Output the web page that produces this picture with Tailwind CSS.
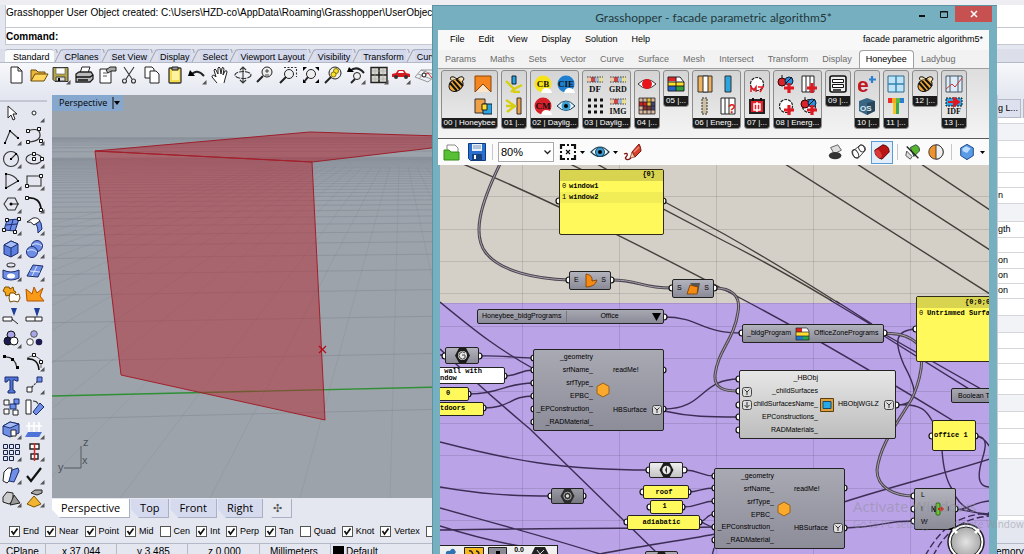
<!DOCTYPE html>
<html lang="en">
<head>
  <meta charset="UTF-8">
  <meta name="viewport" content="width=device-width, initial-scale=1.0">
  <title>Grasshopper - facade parametric algorithm5*</title>
  <script src="https://cdn.jsdelivr.net/npm/@tailwindcss/browser@4"></script>
</head>
<body class="relative flex h-screen flex-col overflow-hidden bg-[#e4e7f0] font-['Liberation_Sans',sans-serif] text-black">

  <!-- Rhino: command history -->
  <header class="border-t-[5px] border-[#eeeef2] bg-[#e4e7f0] pl-[5px]">
    <p class="h-[23px] border-b border-l border-[#c4c8d0] bg-white text-[10px] leading-4 whitespace-nowrap">Grasshopper User Object created: C:\Users\HZD-co\AppData\Roaming\Grasshopper\UserObjects</p>
    <label class="flex h-[17px] items-center border-b border-l border-[#c4c8d0] bg-white text-[10px] font-bold">Command:<input type="text" class="ml-2 h-3 flex-1 outline-none"></label>
  </header>

  <!-- Rhino: toolbar tabs and icons -->
  <nav id="rhino-tabs" class="mt-1 flex h-[14px] items-stretch border-b border-[#b4b9c8] bg-[#dcdfea] pl-[5px] text-[9px] leading-[14px]"></nav>
  <div class="h-[32px] bg-linear-to-b from-[#f7f8fb] to-[#e4e7f0] pl-[6px]">
    <div id="rhino-tools" class="flex w-[428px] justify-between pt-[2px]"></div>
  </div>

  <main class="flex min-h-0 flex-1">
    <div class="w-[52px] pt-[5px] pr-[5px] pb-[11px]">
      <div id="side-tools" class="grid h-full auto-rows-fr grid-cols-2 border-t-2 border-[#c3c7d2]"></div>
    </div>

    <section class="flex min-w-0 flex-1 flex-col">
      <div class="relative min-h-0 flex-1 overflow-hidden bg-[#9ca3ab]">
        <svg class="absolute inset-0 h-full w-full">
          <g transform="translate(-52 -95)">
            <g id="ground" stroke="#6d7580" stroke-opacity=".3" fill="none"></g>
            <path d="M52 396L440 387" stroke="#2f8f35" stroke-width="1.3"/>
            <path d="M95 151L310 132L440 136V147L312 162Z" fill="#b0202c" fill-opacity=".5" stroke="#9c1f2b"/>
            <path d="M95 151L312 162L325 420L121 375Z" fill="#b42832" fill-opacity=".5" stroke="#a3202c"/>
            <path d="M319 346l7 7m0-7l-7 7" stroke="#b80d18" stroke-width="1.3"/>
            <path d="M64 468H81V446" stroke="#555b63" fill="none"/>
            <g fill="#4d535b" font-size="11"><text x="83" y="446">z</text><text x="58" y="471">y</text><text x="82" y="464">x</text></g>
          </g>
        </svg>
        <button class="relative flex h-[16px] items-center bg-[#86a8cf] pr-[3px] pl-[7px] font-['Open_Sans'] text-[9px]">Perspective
          <svg class="ml-[5px] h-[12px] w-[8px]" viewBox="0 0 8 12"><path d="M1 0V12" stroke="#111"/><path d="M2 4H8L5 8Z"/></svg>
        </button>
      </div>
      <div id="view-tabs" class="flex h-[22px] items-start pt-[1px] font-['Open_Sans'] text-[11px]"></div>
    </section>

    <!-- Rhino: properties panel -->
    <aside class="flex w-[27px] flex-col overflow-hidden border-l border-[#c9ccd6] bg-white text-[9px]">
      <div class="flex h-[23px] shrink-0 items-end gap-[2px] bg-[#e4e7f0] leading-[17px] whitespace-nowrap"><span class="border border-l-0 border-[#b4b9c8] bg-[#dde1ef] pr-[2px]">g L...</span><span class="border border-[#b4b9c8] bg-[#dde1ef] px-1">D</span></div>
      <div id="props" class="min-h-0 flex-1 overflow-hidden"></div>
    </aside>
  </main>

  <footer>
    <div id="osnap" class="flex h-[23px] items-center gap-[6px] pl-[9px] text-[9px]"></div>
    <div class="flex h-[11px] overflow-hidden border-t border-[#b4b9c8] text-[10px] leading-4 whitespace-nowrap">
      <span class="w-[46px] border-r border-[#b4b9c8] pl-[6px]">CPlane</span>
      <span class="w-[71px] border-r border-[#b4b9c8] pl-4">x 37.044</span>
      <span class="w-[71px] border-r border-[#b4b9c8] pl-5">y 3.485</span>
      <span class="w-[72px] border-r border-[#b4b9c8] pl-5">z 0.000</span>
      <span class="w-[71px] border-r border-[#b4b9c8] pl-[10px]">Millimeters</span>
      <span class="flex flex-1 gap-[2px] pl-[2px]"><i class="mt-[2px] h-3 w-[11px] bg-black"></i>Default</span>
      <span class="w-[28px]">emory</span>
    </div>
  </footer>

  <!-- Grasshopper window -->
  <section class="absolute top-[5px] right-[27px] bottom-0 left-[432px] flex flex-col border-t border-l border-[#5c93a3] bg-[#76b0c0] pr-2 pl-[5px]">
    <div class="relative flex h-[24px] shrink-0 items-center justify-center font-['Lato'] text-[12px] text-[#24363c]">
      <h1>Grasshopper - facade parametric algorithm5*</h1>
      <div class="absolute top-0 -right-[3px] flex h-4 items-stretch">
        <button aria-label="Minimize" class="w-[22px]"><svg class="mx-auto h-4 w-3" viewBox="0 0 12 16"><path d="M3 10H9" stroke="#111" stroke-width="2"/></svg></button>
        <button aria-label="Maximize" class="w-[22px]"><svg class="mx-auto h-4 w-3" viewBox="0 0 12 16"><path d="M2.500 5.500H9.500V11.500H2.500ZM2 6H10" stroke="#111" fill="none"/></svg></button>
        <button aria-label="Close" class="w-[37px] bg-[#c75050]"><svg class="mx-auto h-4 w-3" viewBox="0 0 12 16"><path d="M3 5L9 11M9 5L3 11" stroke="#fff" stroke-width="1.5"/></svg></button>
      </div>
    </div>

    <div class="flex h-[20px] shrink-0 items-center justify-between bg-[#f8f8f8] px-[6px] text-[9px]">
      <nav class="flex gap-[14px] pl-[6px]"><a href="#">File</a><a href="#">Edit</a><a href="#">View</a><a href="#">Display</a><a href="#">Solution</a><a href="#">Help</a></nav>
      <span>facade parametric algorithm5*</span>
    </div>

    <nav id="gh-tabs" class="flex h-[18px] shrink-0 items-end bg-[#f2f2f2] text-[9px] leading-[18px] text-[#6c6c6c]"></nav>
    <div id="ribbon" class="flex h-[70px] shrink-0 items-start gap-[3px] border-t border-[#a0a0a0] bg-linear-to-b from-[#dedede] to-[#f4f4f4] pt-[1px] pl-[3px]"></div>

    <div class="flex h-[27px] shrink-0 items-center justify-between border-t border-[#5a5a5a] bg-[#fbfbfb] pr-1 pl-1">
      <div class="flex items-center gap-[5px]">
        <button aria-label="Open file"><svg class="h-5 w-5" viewBox="0 0 20 20"><path d="M5 3h8l3 3v8H5z" fill="#fff" stroke="#888"/><path d="M2 8h5l2 2h8v8H2z" fill="#58c034" stroke="#348a1a"/></svg></button>
        <button aria-label="Save file"><svg class="h-5 w-5" viewBox="0 0 20 20"><path d="M1.500 1.500h17v17h-15l-2-2z" fill="#2a6fd0" stroke="#103a80"/><path d="M5 2h10v7H5z" fill="#e8f0fa"/><path d="M6 4h8M6 6h8" stroke="#7896bd"/><path d="M5 12h10v6H5z" fill="#163f7c"/><path d="M7 13h2v4H7z" fill="#fff"/></svg></button>
        <i class="h-4 w-px bg-[#c8c8c8]"></i>
        <div class="relative">
          <select aria-label="Zoom" class="block h-5 w-[56px] appearance-none border border-[#aaaaaa] bg-white pl-[2px] text-[11px]"><option>80%</option></select>
          <svg class="pointer-events-none absolute top-[8px] right-[3px] h-[5px] w-[7px]" viewBox="0 0 7 5"><path d="M.5.5L3.500 3.500L6.500.5" stroke="#222" stroke-width="1.300" fill="none"/></svg>
        </div>
        <button aria-label="Zoom extents" class="flex items-center gap-[3px]"><svg class="h-[18px] w-[18px]" viewBox="0 0 18 18"><path d="M2 6V2H6M12 2H16V6M16 12V16H12M6 16H2V12" stroke="#111" stroke-width="2.200" fill="none"/><path d="M8 2h2M8 16h2M2 8v2M16 8v2" stroke="#111" stroke-width="2"/><path d="M7 7l4 4m0-4l-4 4" stroke="#111" stroke-width="1.200"/></svg><svg class="h-[3px] w-[5px]" viewBox="0 0 5 3"><path d="M0 0H5L2.500 3Z"/></svg></button>
        <button aria-label="Named views" class="flex items-center gap-[3px]"><svg class="h-[18px] w-[20px]" viewBox="0 0 20 18"><path d="M1 9Q10-1 19 9Q10 18 1 9Z" fill="#eef6fb" stroke="#1b3a50" stroke-width="1.200"/><circle cx="10" cy="9" r="4.500" fill="#3d9dd0" stroke="#164a70"/><circle cx="10" cy="9" r="2"/></svg><svg class="h-[3px] w-[5px]" viewBox="0 0 5 3"><path d="M0 0H5L2.500 3Z"/></svg></button>
        <button aria-label="Sketch"><svg class="h-[18px] w-5" viewBox="0 0 20 18"><path d="M9 9L16 1Q18 4 18 8L12 14Z" fill="#d8402c" stroke="#7c1410"/><path d="M11 9L16 4" stroke="#f08a70" stroke-width="1.500"/><path d="M9 9L7 15L12 14Z" fill="#efc9a0" stroke="#7c1410" stroke-width=".6"/><path d="M1 11C5 9 5 12 3 14S5 18 8 15" stroke="#7c1410" fill="none" stroke-width="1.300"/></svg></button>
      </div>
      <div id="preview-tools" class="flex items-center gap-[3px]"></div>
    </div>

    <!-- Definition canvas -->
    <div class="relative ml-[2px] min-h-0 flex-1 overflow-hidden bg-[#d4cfc7] text-[7px]">
      <div class="absolute inset-x-0 top-[138px] bottom-0 border-t border-[#a993cf] bg-[#baa3e7]"></div>
      <svg class="absolute inset-0 h-full w-full">
        <defs>
          <symbol id="graft" viewBox="0 0 10 10"><rect x=".5" y=".5" width="9" height="9" rx="2" fill="#ddd" stroke="#444"/><path d="M2.500 2.500L5 5L7.500 2.500M5 5V8" stroke="#333" fill="none"/></symbol>
          <symbol id="flatten" viewBox="0 0 10 10"><rect x=".5" y=".5" width="9" height="9" rx="2" fill="#ddd" stroke="#444"/><path d="M5 2V7.500M2.500 5L5 7.500L7.500 5" stroke="#333" fill="none"/></symbol>
          <symbol id="comb" viewBox="0 0 14 16"><path d="M7 1L13 4.500V11.500L7 15L1 11.500V4.500Z" fill="#fba92d" stroke="#95621a"/></symbol>
        </defs>
        <g transform="translate(-440 -165)" fill="none">
          <path stroke="#000" stroke-opacity=".11" d="M522.500 165V560M619.500 165V560M716.500 165V560M813.500 165V560M910.500 165V560M440 196.500H1000M440 229.500H1000M440 261.500H1000M440 293.500H1000M440 326.500H1000M440 358.500H1000M440 391.500H1000M440 423.500H1000M440 455.500H1000M440 488.500H1000M440 520.500H1000"/>
          <g stroke="#45403c" stroke-width="1.400">
            <path d="M463 164C590 218 690 272 742 299"/>
            <path d="M570 164L663 209L724 241C770 264 805 285 832 301M597 164L663 201L724 234C770 260 810 285 840 304"/>
            <path d="M785 164L990 294M857 164L990 250M921 164L990 210"/>
          </g>
          <g stroke="#3c2d54" stroke-width="1.400">
            <path d="M742 299C820 340 890 382 960 425M830 300L870 324M836 301L872 324M884 334L990 394M884 336L990 402"/>
            <path d="M664 317C700 317 700 333 742 333M440 302C480 335 500 350 534 369M440 349C480 387 510 412 531 430L656 552"/>
            <path d="M440 355H447M479 356C500 355 515 358 534 358M504 376C520 376 518 370 534 370M468 394C500 394 505 383 534 383M483 408C512 408 508 396 534 396"/>
            <path d="M664 409C705 409 700 379 739 379M664 411C690 417 710 417 739 417"/>
            <path d="M440 442C510 460 560 470 650 470M440 487C480 494 510 496 552 496M684 470C700 470 700 476 715 476M688 492C700 492 700 488 715 488M682 507C700 507 700 501 715 501M699 522C706 522 706 514 715 514M699 522C706 522 706 527 715 527"/>
            <path d="M440 508C490 522 540 535 600 554M440 526C465 534 490 541 520 546M440 530C540 528 620 529 715 527M600 554C640 546 680 541 715 534M714 548L712 556"/>
            <path d="M844 502C900 484 940 475 990 459M844 528C880 528 880 521 914 521"/>
            <path d="M897 405C925 404 912 380 904 365C893 340 896 330 916 329M897 405C925 403 928 414 934 424M942 450C943 465 946 480 952 489"/>
            <path d="M975 436C990 436 985 450 982 460C976 480 980 487 990 487M975 436C984 437 986 442 990 447M955 509C968 510 975 514 990 514M955 509C965 512 975 501 990 501M952 489C958 505 970 514 990 515"/>
            <path d="M925 556C940 530 955 515 990 513M933 556C945 532 962 518 990 516" stroke-dasharray="7 3"/>
          </g>
          <!-- list wires are drawn as two parallel strokes -->
          <g id="list-wires">
            <path d="M500 164C480 205 472 235 486 253S535 279 569 280"/>
            <path d="M611 280C640 280 640 288 672 288"/>
            <path d="M714 288C732 288 741 296 738 312C734 340 718 350 715 375C714 389 725 391 739 391"/>
            <path d="M884 334C900 332 910 337 918 344C928 362 915 395 908 405C896 425 880 445 877 470C877 488 895 496 914 496"/>
          </g>
          <g id="ports" fill="#fff" stroke="#111" stroke-width="1.200"></g>
        </g>
      </svg>

      <!-- Panels -->
      <div class="absolute top-[4px] left-[119px] h-[66px] w-[105px] rounded-[2px] border border-[#2e2c18] bg-[#fff95c] font-['Liberation_Mono'] text-[7px] font-bold">
        <p class="h-[11px] bg-[#d8d44f] pr-2 text-right leading-[9px]">{0}</p>
        <p class="flex h-[11px] items-center"><span class="w-[9px] pl-[2px] font-normal">0</span>window1</p>
        <p class="flex h-[11px] items-center bg-[#f1ed56]"><span class="w-[9px] pl-[2px] font-normal">1</span>window2</p>
      </div>
      <div class="absolute top-[131px] left-[476px] h-[66px] w-[105px] overflow-hidden rounded-[2px] border border-[#2e2c18] bg-[#fff95c] font-['Liberation_Mono'] text-[7px] font-bold whitespace-nowrap">
        <p class="h-[11px] bg-[#d8d44f] pl-[48px] leading-[10px]">{0;0;0}</p>
        <p class="flex h-[11px] items-center"><span class="w-[10px] pl-[2px] font-normal">0</span>Untrimmed Surface</p>
      </div>
      <div class="absolute top-[202px] -left-[6px] h-[17px] w-[71px] rounded-[2px] border border-[#222] bg-white pl-[5px] font-['Liberation_Mono'] text-[7px] leading-[7px] font-bold"><p>&nbsp;wall with</p><p>ndow</p></div>
      <div class="absolute top-[222px] -left-[6px] h-[14px] w-[35px] rounded-[2px] border border-[#222] bg-[#fff95c] pl-[11px] font-['Liberation_Mono'] text-[7px] leading-[11px] font-bold">0</div>
      <div class="absolute top-[237px] -left-[6px] h-[14px] w-[50px] rounded-[2px] border border-[#222] bg-[#fff95c] pl-[5px] font-['Liberation_Mono'] text-[7px] leading-[11px] font-bold">tdoors</div>
      <div class="absolute top-[320px] left-[203px] h-[14px] w-[46px] rounded-[2px] border border-[#222] bg-[#fff95c] pr-1 text-center font-['Liberation_Mono'] text-[7px] leading-[12px] font-bold">roof</div>
      <div class="absolute top-[335px] left-[210px] h-[14px] w-[33px] rounded-[2px] border border-[#222] bg-[#fff95c] pr-1 text-center font-['Liberation_Mono'] text-[7px] leading-[11px] font-bold">1</div>
      <div class="absolute top-[350px] left-[187px] h-[15px] w-[73px] rounded-[2px] border border-[#222] bg-[#fff95c] pr-1 text-center font-['Liberation_Mono'] text-[7px] leading-[12px] font-bold">adiabatic</div>
      <div class="absolute top-[255px] left-[492px] h-[31px] w-[44px] rounded-[2px] border border-[#222] bg-[#fff95c] pl-[1px] font-['Liberation_Mono'] text-[7px] leading-[28px] font-bold">office 1</div>

      <!-- Small components -->
      <div class="absolute top-[106px] left-[129px] flex h-[19px] w-[42px] items-center justify-between rounded-[2px] border border-[#222] bg-linear-to-b from-[#b3b3bd] to-[#8b8b98] px-1">E<svg class="h-[15px] w-[15px]" viewBox="0 0 15 15"><path d="M3 1Q10 2 9 8L14 7Q12 14 3 14Z" fill="#f58a12" stroke="#7a3a00" stroke-width=".8"/></svg>S</div>
      <div class="absolute top-[114px] left-[232px] flex h-[19px] w-[42px] items-center justify-between rounded-[2px] border border-[#222] bg-linear-to-b from-[#b3b3bd] to-[#8b8b98] px-1">S<svg class="h-[15px] w-[15px]" viewBox="0 0 15 15"><path d="M4 2H14L12 12Z" fill="#555"/><path d="M4 4L12 6L11 13L1 13Z" fill="#f58a12" stroke="#7a3a00" stroke-width=".8"/></svg>S</div>
      <div class="absolute top-[144px] left-[37px] flex h-[15px] w-[187px] items-center rounded-[2px] border border-[#222] bg-linear-to-b from-[#a8a8b2] to-[#8b8b98]"><span class="w-[89px] border-r border-[#777785] pl-1">Honeybee_bldgPrograms</span><span class="flex-1 text-center">Office</span><svg class="mr-[2px] h-[8px] w-[9px]" viewBox="0 0 9 8"><path d="M0 0H9L4.500 8Z"/></svg></div>
      <div class="absolute top-[159px] left-[302px] flex h-[19px] w-[142px] items-center gap-1 rounded-[2px] border border-[#222] bg-linear-to-b from-[#b3b3bd] to-[#8b8b98] pl-1">_bldgProgram<svg class="h-[14px] w-[15px] shrink-0" viewBox="0 0 15 14"><path d="M1 1H7V5H1Z" fill="#d22"/><path d="M7 1H12L14 5H7Z" fill="#fff"/><path d="M1 5H14V9H1Z" fill="#fd3"/><path d="M1 9H8V13H1Z" fill="#27c"/><path d="M8 9H14V13H8Z" fill="#2a4"/><path d="M1 1H12L14 4V13H1Z M1 5H14 M1 9H14" fill="none" stroke="#222" stroke-width=".7"/></svg>OfficeZonePrograms</div>
      <div class="absolute top-[182px] left-[5px] h-[17px] w-[34px] rounded-[2px] border border-[#222] bg-linear-to-b from-[#b3b3bd] to-[#8b8b98]"><svg class="mx-auto h-[15px] w-[15px]" viewBox="0 0 15 15"><path d="M4 0H11L15 7.500L11 15H4L0 7.500Z" fill="#1c1c1c"/><circle cx="7.500" cy="7.500" r="4.500" fill="#e8e8e8"/><path d="M10 5A3.500 3.500 0 1 0 10 10V7H7" fill="none" stroke="#444"/></svg></div>
      <div class="absolute top-[297px] left-[209px] h-[16px] w-[34px] rounded-[2px] border border-[#222] bg-linear-to-b from-[#efefef] to-[#c4c4c4]"><svg class="mx-auto h-[14px] w-[15px]" viewBox="0 0 15 15"><path d="M4 0H11L15 7.500L11 15H4L0 7.500Z" fill="#1c1c1c"/><circle cx="7.500" cy="7.500" r="4.500" fill="#e8e8e8"/><path d="M8 3L6 7.500L8 12" fill="#222"/></svg></div>
      <div class="absolute top-[323px] left-[111px] h-[16px] w-[33px] rounded-[2px] border border-[#222] bg-linear-to-b from-[#9a9aa6] to-[#77777f]"><svg class="mx-auto h-[14px] w-[15px]" viewBox="0 0 15 15"><path d="M4 0H11L15 7.500L11 15H4L0 7.500Z" fill="#2c2c2c"/><circle cx="7.500" cy="7.500" r="4" fill="none" stroke="#bbb"/><circle cx="7.500" cy="7.500" r="1.800" fill="#ddd"/></svg></div>
      <div class="absolute top-[386px] left-[205px] h-4 w-[33px] rounded-[2px] border border-[#222] bg-[#a5a5b0]"><svg class="mx-auto h-[14px] w-[15px]" viewBox="0 0 15 15"><path d="M4 0H11L15 7.500L11 15H4L0 7.500Z" fill="#1c1c1c"/></svg></div>
      <div class="absolute top-[223px] left-[511px] h-[15px] w-[60px] rounded-[2px] border border-[#222] bg-linear-to-b from-[#a8a8b2] to-[#8b8b98] pl-[6px] leading-[13px] whitespace-nowrap">Boolean Toggle</div>

      <!-- Surface components -->
      <div class="absolute top-[184px] left-[93px] flex h-[82px] w-[131px] items-center rounded-[2px] border border-[#222] bg-linear-to-b from-[#a9a9b3] to-[#8d8d9a]">
        <div class="grid h-full w-[59px] grid-rows-6 items-center py-[1px] text-right"><span>_geometry</span><span>srfName_</span><span>srfType_</span><span>EPBC_</span><span>_EPConstruction_</span><span>_RADMaterial_</span></div>
        <svg class="mx-[3px] h-4 w-[14px]"><use href="#comb"/></svg>
        <div class="grid h-full flex-1 grid-rows-2 items-center pr-[1px]"><span>readMe!</span><span class="flex items-center justify-between">HBSurface<svg class="h-[10px] w-[10px]"><use href="#graft"/></svg></span></div>
      </div>
      <div class="absolute top-[303px] left-[274px] flex h-[81px] w-[131px] items-center rounded-[2px] border border-[#222] bg-linear-to-b from-[#a9a9b3] to-[#8d8d9a]">
        <div class="grid h-full w-[59px] grid-rows-6 items-center py-[1px] text-right"><span>_geometry</span><span>srfName_</span><span>srfType_</span><span>EPBC_</span><span>_EPConstruction_</span><span>_RADMaterial_</span></div>
        <svg class="mx-[3px] h-4 w-[14px]"><use href="#comb"/></svg>
        <div class="grid h-full flex-1 grid-rows-2 items-center pr-[1px]"><span>readMe!</span><span class="flex items-center justify-between">HBSurface<svg class="h-[10px] w-[10px]"><use href="#graft"/></svg></span></div>
      </div>
      <div class="absolute top-[205px] left-[299px] flex h-[69px] w-[157px] items-center rounded-[2px] border border-[#222] bg-linear-to-b from-[#e6e6e6] to-[#bdbdbd]">
        <div class="flex h-full w-[12px] shrink-0 flex-col justify-center gap-[3px] pb-[12px] pl-[2px]">
          <svg class="h-[10px] w-[10px]"><use href="#graft"/></svg>
          <svg class="h-[10px] w-[10px]"><use href="#flatten"/></svg>
        </div>
        <div class="grid h-full w-[66px] shrink-0 grid-rows-5 items-center justify-items-end py-[1px]"><span>_HBObj</span><span>_childSurfaces</span><span>childSurfacesName_</span><span>EPConstructions_</span><span>RADMaterials_</span></div>
        <svg class="mx-[2px] h-[14px] w-[14px] shrink-0" viewBox="0 0 14 14"><path d="M.5.5H13.500V13.500H.5Z" fill="#dca040" stroke="#5c3d0c"/><path d="M3 3.500H11V10.500H3Z" fill="#27a9e8" stroke="#134a6c"/></svg>
        <span class="flex flex-1 items-center justify-between pr-[1px] pl-[2px]">HBObjWGLZ<svg class="h-[10px] w-[10px]"><use href="#graft"/></svg></span>
      </div>
      <div class="absolute top-[323px] left-[474px] flex h-[42px] w-[42px] items-center justify-between rounded-[2px] border border-[#222] bg-linear-to-b from-[#b3b3bd] to-[#8b8b98] px-[6px]">
        <div class="grid h-full grid-rows-3 items-center"><span>L</span><span>i</span><span>W</span></div>
        <svg class="h-4 w-[14px]" viewBox="0 0 14 16"><rect x="5" y="2" width="4" height="12" rx="1" fill="#6cc531" stroke="#2c6a10"/><path d="M1 11V5L4 11V5" stroke="#111" fill="none"/><path d="M7 8H13M11 6L7 8L11 10Z" stroke="#c21" fill="#c21"/></svg><span>i</span>
      </div>

      <!-- Compass widget -->
      <svg class="absolute top-[355px] left-[505px] h-[44px] w-[44px]" viewBox="0 0 44 44"><defs><radialGradient id="dial"><stop offset="0" stop-color="#e4e4e4"/><stop offset="1" stop-color="#a9a9a9"/></radialGradient></defs><path d="M3 9L9 7L12 12Z"/><circle cx="21" cy="22" r="18" fill="#fff" stroke="#222" stroke-width="1.500"/><circle cx="21" cy="22" r="15" fill="url(#dial)" stroke="#222"/><path d="M8 9l4 4M34 9l-4 4" stroke="#fff" stroke-width="3"/></svg>

      <!-- Bottom palette -->
      <div class="absolute bottom-0 left-0 flex h-[9px] w-[118px] items-start gap-[4px] overflow-hidden border-t border-r border-[#222] bg-[#f0f0f0] pl-[2px]">
        <svg class="h-5 w-[18px] shrink-0" viewBox="0 0 18 20"><path d="M4 9Q3 4 8 5Q9 2 12 3L14 6L12 9Z" fill="#2f74b0"/></svg>
        <svg class="h-5 w-[20px] shrink-0" viewBox="0 0 20 20"><path d="M.5 1.500H19.500V19H.5Z" fill="#f8b81e" stroke="#222"/><path d="M5 5Q8 4 9 9M12 5Q15 5 15 9" stroke="#222" fill="none" stroke-width="1.500"/></svg>
        <svg class="h-5 w-[19px] shrink-0" viewBox="0 0 19 20"><path d="M.5 1.500H18.500V19H.5Z" fill="#8b8b95" stroke="#222"/><path d="M8 5H12V9H8Z"/></svg>
        <span class="w-4 text-center leading-[8px] font-bold">0.0</span>
        <svg class="h-5 w-[18px] shrink-0" viewBox="0 0 18 20"><path d="M4 1H14L18 9L14 17H4L0 9Z" fill="#222"/><path d="M6 4l3 4 4-4" stroke="#ddd" fill="none"/></svg>
      </div>
    </div>
  </section>

  <div class="pointer-events-none absolute bottom-[22px] left-[853px] font-['Open_Sans'] whitespace-nowrap text-[#8f8f9c]/55">
    <p class="text-[15px] leading-5">Activate Windows</p>
    <p class="text-[10px] leading-4">Go to PC settings to activate Windows</p>
  </div>

  <script>
    const corner = '<path d="M19.500 15V19.500H15Z" fill="#555"/>';
    const L = 'fill="none" stroke="#333" stroke-width="1.100"';
    const dot = (x, y) => `<path d="M${x - 1.5} ${y - 1.5}h3v3h-3z" fill="#fff" stroke="#111"/>`;

    // Rhino main toolbar
    const tools = {
      New: `<path d="M5 2h7l4 4v12H5zM12 2v4h4" fill="#fff" stroke="#222"/>`,
      Open: `<path d="M2 16V5h5l2 2h7v3" fill="#e9b53a" stroke="#6a4a08"/><path d="M2 16L6 9h13l-4 7z" fill="#ffd75e" stroke="#6a4a08"/>`,
      Save: `<path d="M2 2.500h15v14H4l-2-2z" fill="#b5a548" stroke="#333"/><path d="M5 3h9v6H5z" fill="#fff" stroke="#555" stroke-width=".6"/><path d="M5 12h9v4H5z" fill="#ddd" stroke="#444"/><path d="M7 13h2v3H7z"/>${corner}`,
      Print: `<path d="M6 8L8 2h8l-2 6z" fill="#fff" stroke="#222"/><path d="M2 9l3-2h12l2 3v4l-3 3H2z" fill="#bbb" stroke="#222" stroke-width="1.300"/><path d="M2 12h14l3-2M4 15h10" stroke="#111" stroke-width="1.500" fill="none"/>`,
      Properties: `<path d="M3 4h11v14H3z" fill="#fff" stroke="#222"/><path d="M6 8h5M6 11h4" stroke="#555"/><path d="M9 5l4-3h6v4h-5l-3 2z" fill="#aaa" stroke="#222"/>`,
      Cut: `<path d="M5 2L13 14M15 2L7 14" ${L}/><circle cx="5.500" cy="16" r="2" ${L}/><circle cx="14.500" cy="16" r="2" ${L}/>`,
      Copy: `<path d="M3 2h7l2 2v9H3z" fill="#fff" stroke="#222"/><path d="M8 6h6l3 3v9H8z" fill="#fff" stroke="#222"/>`,
      Paste: `<rect x="4" y="3" width="12" height="15" rx="1" fill="#f5dd52" stroke="#333" stroke-width="1.300"/><path d="M7 2h6v3H7z" fill="#999" stroke="#222"/><path d="M7 6h7v9H7z" fill="#fdf2a0"/>`,
      Undo: `<path d="M4 10Q10 3 17 11" fill="none" stroke="#222" stroke-width="2"/><path d="M1 11L3 5L8 11Z"/>${corner}`,
      Pan: `<path d="M7 18L2 12Q2 9 5 11L6 12L4 5Q5 3 6 5L8 9L8 3Q9 1 10 3L11 9L12 3Q13 1 14 4L13 10L15 6Q17 5 17 7L15 14L14 18" fill="#fff" stroke="#222"/>`,
      Rotate: `<ellipse cx="10" cy="10" rx="8" ry="3.500" ${L} stroke-dasharray="5 1"/><path d="M10 2V18M7 15l3 3 3-3M7 5l3-3 3 3" ${L}/>`,
      Zoom: `<circle cx="12" cy="7" r="5" fill="#eee" stroke="#222"/><path d="M8 11L2 17" stroke="#222" stroke-width="2"/><path d="M10 6h4M12 4v4M10 10h4" stroke="#222" stroke-width=".8"/>`,
      'Zoom window': `<path d="M6 2.500H18.500V12" ${L} stroke-dasharray="2 1.500"/><circle cx="11" cy="9" r="4.500" fill="#eee" stroke="#222"/><path d="M8 12L2 18" stroke="#222" stroke-width="2"/>`,
      'Zoom extents': `<circle cx="10" cy="9" r="4.500" fill="#eee" stroke="#222"/><path d="M7 12L3 17" stroke="#222" stroke-width="2"/><path d="M2 2h4L2 6zM18 2v4l-4-4zM18 18h-4l4-4zM2 18v-4l3 4z"/>`,
      'Zoom selected': `<circle cx="12" cy="8" r="6" fill="#eee" stroke="#222"/><path d="M8 12L2 18" stroke="#222" stroke-width="2"/><circle cx="13" cy="6" r="2.500" fill="#f8e02c" stroke="#8a7400"/><circle cx="10.500" cy="9.500" r="2.500" fill="#f8e02c" stroke="#8a7400"/>`,
      'Undo view': `<path d="M4 6Q11 0 18 8" stroke="#222" stroke-width="2" fill="none"/><path d="M1 7L3 2L8 7Z"/><circle cx="11" cy="11" r="3.500" fill="#eee" stroke="#222"/><path d="M9 14L5 18" stroke="#222" stroke-width="2"/>${corner}`,
      'Four views': `<path d="M2 2.500h16v15H2z" fill="#d6d6cd" stroke="#222" stroke-width="1.400"/><path d="M10 2V18M2 10H18" stroke="#222" stroke-width="1.600"/><path d="M6 3v14M14 3v14M3 6h14M3 14h14" stroke="#aaa" stroke-width=".6"/>${corner}`,
      Car: `<path d="M1 12V9l4-1 2-3h6l2 3 4 1v3z" fill="#d51a1f"/><path d="M8 6h4l1 2H7z" fill="#fff"/><circle cx="5" cy="12" r="2" fill="#333"/><circle cx="15" cy="12" r="2" fill="#333"/>${corner}`,
      CPlane: `<path d="M1 12L7 5H20M1 12L14 17L20 12M4 9L17 14M7 5L18 9M5 14L12 5" fill="none" stroke="#999"/><path d="M8 11L14 8L18 13" fill="none" stroke="#c22"/><circle cx="10" cy="10" r="2" fill="#fff" stroke="#111"/>`
    };
    const iconButton = (name, body) => `<button aria-label="${name}" title="${name}" class="grid place-items-center"><svg class="h-5 w-5" viewBox="0 0 20 20">${body}</svg></button>`;
    document.getElementById('rhino-tools').innerHTML = Object.entries(tools).map(([n, b]) => iconButton(n, b)).join('');

    // Rhino side toolbar, two icons per row
    const blue = 'fill="#6f8fe6" stroke="#1c2d6e"';
    const side = [
      ['Select', `<path d="M6 3V15L9 12L11 17L13 16L11 11H15Z" fill="#fff" stroke="#222"/>`],
      ['Point', `<circle cx="9" cy="10" r="2" fill="#fff" stroke="#222"/>${corner}`],
      ['Polyline', `<path d="M3 17L8 5L16 12" ${L}/><path d="M2 16h2v2H2zM7 4h2v2H7zM15 11h2v2h-2z"/>${corner}`],
      ['Curve', `<path d="M3 5Q14 1 15 8T4 16" ${L}/>${dot(3, 5)}${dot(14, 3)}${dot(3, 16)}${dot(16, 15)}${corner}`],
      ['Circle', `<circle cx="9" cy="10" r="7.500" ${L}/><path d="M9 10L14 5" ${L}/><path d="M8 9h2v2H8zM13 4h2v2h-2z"/>${corner}`],
      ['Ellipse', `<ellipse cx="9" cy="10" rx="8" ry="5" ${L}/>${dot(9, 5)}${dot(9, 10)}${dot(17, 10)}${corner}`],
      ['Arc', `<path d="M4 3V17L16 10Q13 4 4 3" ${L}/><path d="M3 2h2v2H3zM3 16h2v2H3zM15 9h2v2h-2z"/>${corner}`],
      ['Rectangle', `<path d="M2 5H16V15H2Z" ${L}/>${dot(2, 15)}${dot(16, 5)}${corner}`],
      ['Polygon', `<path d="M6 4H13L16 10L13 16H6L2 10Z" ${L}/><path d="M9 10H17" ${L}/><circle cx="9" cy="10" r="1.500"/>${corner}`],
      ['Fillet', `<path d="M3 4Q15 3 16 15" fill="none" stroke="#111" stroke-width="1.800"/>${dot(2, 4)}${dot(16, 16)}${corner}`],
      ['Surface', `<path d="M5 4L17 3L13 15L2 14Z" ${blue}/><path d="M11 4L8 14M4 9L15 8" stroke="#1c2d6e"/>${dot(5, 4)}${dot(17, 3)}${dot(2, 14)}${dot(13, 16)}${corner}`],
      ['Sweep', `<path d="M9 7Q13 8 13 17L17 13Q17 6 13 3Z" ${blue}/><path d="M2 6L8 2Q13 1 15 5L9 9Q6 5 2 6Z" fill="#fff" stroke="#222"/>${corner}`],
      ['Box', `<path d="M2 6L9 2L16 5V14L9 18L2 15Z" fill="#5c80e0" stroke="#1c2d6e"/><path d="M2 6L9 9L16 5L9 2Z" fill="#a7bdf7" stroke="#1c2d6e"/><path d="M9 9V18" stroke="#1c2d6e"/>${corner}`],
      ['Union', `<circle cx="12" cy="7" r="5.500" ${blue}/><circle cx="7" cy="13" r="5.500" ${blue}/><path d="M2 12Q7 9 12 13M7 6Q12 3 17 7" stroke="#dde6ff" fill="none"/>${corner}`],
      ['Extrude', `<ellipse cx="9" cy="3" rx="4" ry="2" ${L}/><path d="M1 8Q9 12 17 8V16Q9 20 1 16Z" ${blue}/><ellipse cx="9" cy="14" rx="4" ry="2.500" fill="#fff"/>${corner}`],
      ['Patch', `<path d="M2 14L8 3L18 4L13 15Z" ${blue}/><path d="M5 9L15 10M12 4L7 14" stroke="#dde6ff"/>${corner}`],
      ['Join', `<path d="M3 3h4l1 2 3-2 1 4 2 1-2 3H8l-4 1-1-4-2-1z" fill="#f3a51c" stroke="#7a4d00"/><path d="M8 9h4l2 2 3-1 1 4-2 4-4-1-4 1-1-4z" fill="#fff" stroke="#7a4d00"/>`],
      ['Explode', `<path d="M2 17L1 5L7 10L9 3L12 9L18 4L15 12L19 17Z" fill="#f99b16" stroke="#b05500"/>`],
      ['Trim', `<path d="M9 1H15L12 9Z" fill="#1b3f9b"/><path d="M1 10H10V14H1ZM10 12L16 17" fill="#fff" stroke="#222"/>`],
      ['Split', `<path d="M9 1H15L12 10Z" fill="#1b3f9b"/><path d="M1 10H17V14H1ZM10 10V14" fill="#fff" stroke="#222"/>`],
      ['Group', `<circle cx="9" cy="6" r="4" fill="#a9a7ea" stroke="#111"/><circle cx="6" cy="12" r="4" fill="#1c1c50" stroke="#111"/><circle cx="12" cy="12" r="4" fill="#fff" stroke="#111"/>${corner}`],
      ['Ungroup', `<circle cx="9" cy="5" r="3.300" fill="#a9a7ea" stroke="#555"/><circle cx="5" cy="13" r="3.300" fill="#fff" stroke="#444"/><circle cx="14" cy="13" r="3.300" fill="#1c1c50"/>`],
      ['Edit points', `<path d="M2 5Q13 4 15 16" ${L}/><path d="M1 3h3v3H1zM9 6h3v3H9zM14 14h3v3h-3z"/>`],
      ['Control points', `<path d="M2 7Q13 6 14 18" stroke="#111" stroke-width="1.600" fill="none"/><path d="M2 6L9 3L16 8V16" stroke="#666" fill="none"/>${dot(9, 3)}${dot(16, 10)}${corner}`],
      ['Text', `<path d="M3 2H16V6H14L13 5H11V15L13 16V18H6V16L8 15V5H6L5 7H3Z" fill="#4f73d6" stroke="#1c2d6e"/>`],
      ['Move', `<path d="M2 12h5v5H2z" fill="#fff" stroke="#222"/><path d="M12 2h5v5h-5z" ${blue}/><path d="M7 12L12 7" ${L} stroke-dasharray="2 1"/>${corner}`],
      ['Copy object', `<path d="M2 3h5v5H2zM2 12h5v5H2zM11 13h5v5h-5z" fill="#fff" stroke="#222"/><path d="M12 2h5v5h-5zM8 7h6v5H8z" ${blue}/>`],
      ['Rotate object', `<path d="M1 3H6V17H1Z" fill="#fff" stroke="#222"/><path d="M8 15L15 6L19 10L11 18Z" ${blue}/><path d="M8 4Q12 4 13 7" ${L}/>`],
      ['Cage', `<path d="M1 6L8 2L17 4V13L8 17L1 14Z" fill="#6f8fe6" stroke="#1c2d6e"/><path d="M1 6L8 8L17 4L8 2Z" fill="#a7bdf7" stroke="#1c2d6e"/><path d="M9 10h5v6H9z" fill="#fff" stroke="#222"/>${corner}`],
      ['Project', `<path d="M3 12H17L14 17H0Z" fill="#4f73d6"/><path d="M4 2V12M9 2V12M14 2V12M1 6H17" stroke="#fff" stroke-width="1.500"/>${corner}`],
      ['Array', `<path d="M1.500 2.500h4v4h-4zM7.500 2.500h4v4h-4zM13.500 2.500h4v4h-4zM1.500 8.500h4v4h-4zM7.500 8.500h4v4h-4zM13.500 8.500h4v4h-4zM1.500 14.500h4v4h-4zM7.500 14.500h4v4h-4z" fill="#dfe6ff" stroke="#1c2340"/>${corner}`],
      ['Align', `<path d="M5 2H14V7H5ZM6 12H13V17H6Z" fill="#fff" stroke="#222" stroke-width="1.400"/><path d="M9.500 1V19" stroke="#d22" stroke-width="1.500"/>${corner}`],
      ['Bend', `<path d="M2 7L6 3H10L8 15L5 18L1 16Z" fill="#fff" stroke="#222"/><path d="M10 5L16 3L17 6L12 17L7 16Z" ${blue}/>${corner}`],
      ['Check', `<path d="M2 11L6 16L16 3" fill="none" stroke="#111" stroke-width="2.200"/>${corner}`],
      ['Solids', `<path d="M1 9L5 4L11 5V13L7 16L1 14Z" fill="#ccc" stroke="#222"/><path d="M12 7L18 15L8 17Z" fill="#999" stroke="#222"/>${corner}`],
      ['Render', `<path d="M2 16L9 8L16 16L9 19Z" fill="#f2b533" stroke="#7a5200"/><path d="M6 5L10 2H17V5L12 7Z" fill="#aaa" stroke="#222"/>${corner}`]
    ];
    document.getElementById('side-tools').innerHTML = side.map(([n, b]) => iconButton(n, b)).join('');

    // Tabs
    const slash = '<svg class="h-[13px] w-[9px]" viewBox="0 0 9 13"><path d="M1 0Q3 0 3 3V4M1 13L7 1H9" fill="none" stroke="#9aa1b5"/></svg>';
    document.getElementById('rhino-tabs').innerHTML = ['Standard', 'CPlanes', 'Set View', 'Display', 'Select', 'Viewport Layout', 'Visibility', 'Transform', 'Curve Tools']
      .map((t, i) => i === 0
        ? `<button class="rounded-t-[3px] border-t border-[#b4b9c8] bg-[#fafbfd] pr-[4px] pl-2">${t}</button>${slash}`
        : `<button class="border-t border-[#aab0c4] bg-[#d3d8ec] px-[2px] whitespace-nowrap">${t}</button>${slash}`).join('');

    document.getElementById('view-tabs').innerHTML = ['Perspective', 'Top', 'Front', 'Right', '✣']
      .map((t, i) => `<button class="mr-[1px] h-[19px] border-r border-b border-[#aab0c4] px-[9px] leading-[18px] [clip-path:polygon(0_0,100%_0,100%_100%,8px_100%,0_55%)] ${i === 0 ? 'bg-white' : i === 4 ? 'bg-[#e4e7f0] text-[#555]' : 'bg-[#d5daee]'}">${t}</button>`).join('');

    document.getElementById('gh-tabs').innerHTML = ['Params', 'Maths', 'Sets', 'Vector', 'Curve', 'Surface', 'Mesh', 'Intersect', 'Transform', 'Display', 'Honeybee', 'Ladybug']
      .map(t => t === 'Honeybee'
        ? `<button class="h-[18px] rounded-t-[4px] border border-b-0 border-[#a0a0a0] bg-white px-[6px] leading-[15px] text-black">${t}</button>`
        : `<button class="px-[7px]">${t}</button>`).join('');

    // Object snaps
    const snaps = [['End', 1], ['Near', 1], ['Point', 1], ['Mid', 1], ['Cen', 0], ['Int', 1], ['Perp', 1], ['Tan', 1], ['Quad', 0], ['Knot', 1], ['Vertex', 1], ['Project', 0]];
    document.getElementById('osnap').innerHTML = snaps.map(([n, on]) => `
      <label class="flex items-center gap-[3px]"><span class="grid h-[11px] w-[11px]">
        <input type="checkbox" ${on ? 'checked' : ''} class="peer col-start-1 row-start-1 h-[11px] w-[11px] appearance-none border border-[#555] bg-white">
        <svg class="pointer-events-none col-start-1 row-start-1 hidden h-[11px] w-[11px] peer-checked:block" viewBox="0 0 11 11"><path d="M2.500 5L4.500 8L8.500 2.500" fill="none" stroke="#111" stroke-width="1.700"/></svg>
      </span>${n}</label>`).join('');

    // Property rows: [height, text, shaded]
    const rows = [[6, '', 0], [17, '', 1], [17, '', 0], [15, '', 0], [15, '', 0], [16, 'n', 0], [18, '', 1], [16, 'gth', 0], [15, '', 0], [16, 'on', 0], [15, 'on', 0], [15, 'on', 0], [17, '', 0], [17, '', 1], [16, '', 0], [15, '', 0], [16, '', 0], [15, '', 0], [17, '', 1], [17, '', 0], [15, '', 0], [15, '', 0], [57, '', 1]];
    document.getElementById('props').innerHTML = rows.map(([h, t, s]) =>
      `<p class="flex items-center border-b border-[#d4d6dc] ${s ? 'bg-[#f2f3f6]' : ''}" style="height:${h}px">${t}</p>`).join('');

    // Honeybee ribbon
    const T = (s, y, size, x = 9) => `<text x="${x}" y="${y}" font-family="Liberation Serif" font-weight="bold" font-size="${size}" text-anchor="middle" fill="#111">${s}</text>`;
    const bee = `<ellipse cx="9" cy="10" rx="7.500" ry="6" transform="rotate(-35 9 10)" fill="#f2a93c" stroke="#111"/><path d="M3 8L10 16M6 6L13 14M9 4L16 11" stroke="#111" stroke-width="2"/><path d="M4 5Q2 1 7 2L10 4M11 3Q16 0 17 4L15 7" fill="#f7e0b0" stroke="#111"/>`;
    const dots3 = '<path d="M1 2h4v5H1z" fill="#e9c9a8"/><path d="M5 2h4v5H5z" fill="#c84848"/><path d="M9 2h4v5H9z" fill="#9db8d8"/><path d="M13 2h4v5h-4z" fill="#e8df90"/><path d="M1 2H17M1 7H17" stroke="#444" stroke-dasharray="1.500 1"/>';
    const sky = '<path d="M7 18Q8 13 12 13Q17 13 18 18Z" fill="#fff"/>';
    const red = '<path d="M12 8V18M7 13H17" stroke="#e01822" stroke-width="3.200"/>';
    const drops = '<circle cx="5" cy="7" r="4" fill="#d8232a" stroke="#300"/><circle cx="12" cy="6" r="4" fill="#2f8fd8" stroke="#024"/><path d="M9 8L15 2M5 3V0" stroke="#111"/>';
    const gauge = '<circle cx="9" cy="9" r="6.500" fill="#fff" stroke="#222" stroke-width="1.200" stroke-dasharray="3 1"/>';
    const groups = [
      ['00 | Honeybee', 'w-[57px]', [bee, `<path d="M1 1H17V17L9 9L1 17Z" fill="#f5861f" stroke="#8a4508"/><path d="M3 17L9 10L15 17Z" fill="#fde5c5"/>`, '', `<path d="M1 2H11V16H1Z" fill="#f0a045" stroke="#333"/><path d="M9 7H18V17H9Z" fill="#2ba4e0" stroke="#123"/><path d="M8 7H13V13H8Z" fill="#ffe12a" stroke="#222"/>`]],
      ['01 |...', 'w-[26px]', [`<path d="M7 1H11V9H7Z" fill="#2ba4e0" stroke="#123"/><path d="M1 6L9 14L17 10M9 14L6 17M9 14V17H15" stroke="#d8cf12" stroke-width="2.400" fill="none"/>`, `<path d="M12 1H16V17H12Z" fill="#f0a045" stroke="#333"/><path d="M1 3L10 9L2 15M1 9H10" stroke="#d8cf12" stroke-width="2.400" fill="none"/>`]],
      ['02 | Daylig...', 'w-[49px]', [`<circle cx="9" cy="9" r="8.500" fill="#f7e416"/>${sky}${T('CB', 12, 9)}`, `<circle cx="9" cy="9" r="8.500" fill="#1f7fd0"/>${sky}${T('CIE', 12, 9)}`, `<circle cx="9" cy="9" r="8.500" fill="#d8202a"/>${sky}${T('CM', 12, 9)}`, `<path d="M0 9Q9-1 18 9Q9 18 0 9Z" fill="#e6f4fb" stroke="#135"/><circle cx="9" cy="9" r="4.500" fill="#3aa0d4"/><circle cx="9" cy="9" r="2"/>`]],
      ['03 | Daylig...', 'w-[49px]', [dots3 + T('DF', 17, 9), dots3 + T('GRD', 17, 8), `<path d="M2 3H17M2 9H17M2 15H17" stroke="#111" stroke-width="3" stroke-dasharray="3 3"/>`, dots3 + T('IMG', 17, 8)]],
      ['04 |...', 'w-[26px]', [`<path d="M0 9Q9 0 18 9Q9 18 0 9Z" fill="#fff" stroke="#333"/><circle cx="9" cy="9" r="5" fill="#e8161c"/>`, `<path d="M1 1H17V17H1Z" fill="#d8b8a0"/><path d="M1 5H9V9H1Z" fill="#c22"/><path d="M9 1H13V9H9Z" fill="#e8c030"/><path d="M5 9H13V13H5Z" fill="#833"/><path d="M13 5H17V13H13Z" fill="#447"/><path d="M1 1H17V17H1ZM5 1V17M9 1V17M13 1V17M1 5H17M1 9H17M1 13H17" fill="none" stroke="#222" stroke-width=".8"/>`]],
      ['05 |...', 'w-[26px]', [`<path d="M1 2H9V6H1Z" fill="#e3242b"/><path d="M9 2H13L17 7H9Z" fill="#fff"/><path d="M1 7H17V11H1Z" fill="#ffe12a"/><path d="M1 11H9V16H1Z" fill="#2563c8"/><path d="M9 11H17V16H9Z" fill="#2fa13a"/><path d="M1 2H13L17 7V16H1ZM1 7H17M1 11H17M9 2V16" fill="none" stroke="#222"/>`]],
      ['06 | Energ...', 'w-[49px]', [`<path d="M2 1H16V17H2Z" fill="#f0b25a" stroke="#333"/><path d="M7 1H12V17H7Z" fill="#fff" stroke="#333"/>`, `<path d="M6 1H12V17H6Z" fill="#2ba4e0" stroke="#333"/>`, `<path d="M6 1H11V17H6Z" fill="#cbbf9f" stroke="#333" stroke-dasharray="2 1"/>`, `<path d="M2 1H16V17H2ZM6 1V17M10 1V17" fill="#fff" stroke="#222"/><text x="9" y="16" font-size="13" font-weight="bold" fill="#e01822">?</text>`]],
      ['07 |...', 'w-[26px]', [gauge + '<path d="M3 17V12L6 15L8 12V17M10 12H15L12 17" stroke="#e01822" stroke-width="1.500" fill="none"/>', `<path d="M2 3H16V16H2Z" fill="#e8202a" stroke="#222" stroke-width="2"/><path d="M6 7H12V13H6ZM9 5V15" stroke="#fff" fill="none" stroke-width="1.500"/><path d="M5 1V4M13 1V4" stroke="#111" stroke-width="2"/>`]],
      ['08 | Energ...', 'w-[49px]', [drops + red, `<path d="M2 1H14V17H2ZM6 1V17M10 1V17" fill="#fff" stroke="#222"/>${red}`, gauge + red, gauge + drops + red]],
      ['09 |...', 'w-[26px]', [`<rect x="1" y="1" width="16" height="16" rx="2" fill="#eee" stroke="#111" stroke-width="1.600"/><path d="M3.500 4.500H14.500V7.500H3.500ZM3.500 9.500H14.500V12.500H3.500Z" fill="#fff" stroke="#111"/><path d="M4 15H12" stroke="#111" stroke-width="1.500"/>`]],
      ['10 |...', 'w-[26px]', [`<text x="-1" y="17" font-size="21" font-weight="bold" fill="#c01820">e</text><path d="M14 1V8M11 4.500H18" stroke="#2a7fd0" stroke-width="2.200"/>`, `<path d="M1 4L9 1L17 4V14L9 18L1 14Z" fill="#3a6686"/><path d="M9 6V18L17 14V4Z" fill="#27475f"/><text x="2" y="14" font-size="8" font-weight="bold" fill="#dfeaf2">OS</text>`]],
      ['11 |...', 'w-[26px]', [`<path d="M1 1H17V17H1Z" fill="#bfe4f7" stroke="#2a6a90"/><path d="M9 1V17M1 9H17" stroke="#3584b0" stroke-width="1.500"/>`, `<path d="M1 1H5V6H1Z" fill="#e8302a"/><path d="M5 1H9V6H5Z" fill="#f5a623"/><path d="M9 1H13V6H9Z" fill="#58b947"/><path d="M13 1H17V6H13Z" fill="#2a80d0"/><path d="M6 6H9V17H6Z" fill="#f5c623"/><path d="M9 6H12V17H9Z" fill="#3aa655"/>`]],
      ['12 |...', 'w-[26px]', [bee]],
      ['13 |...', 'w-[26px]', [`<path d="M1 1H17V17H1ZM5 1V17M13 1V17" fill="#dcebf5" stroke="#456"/><path d="M1 14L7 9L10 12L17 3" stroke="#c33" fill="none"/>`, `<path d="M1 1H17V9H1Z" fill="#2ba4e0" stroke="#111" stroke-dasharray="2 1"/><path d="M3 5H10M9 1L14 5L9 9Z" stroke="#e01822" fill="#e01822" stroke-width="2"/>${T('IDF', 17, 8)}`]]
    ];
    document.getElementById('ribbon').innerHTML = groups.map(([name, width, icons]) => `
      <div class="${width} shrink-0 overflow-hidden rounded-[3px] border border-[#8c8c8c] bg-linear-to-b from-[#d4d4d4] to-[#ececec]">
        <div class="grid justify-items-center gap-y-[4px] pt-[4px] pb-[3px] ${icons.length > 2 ? 'grid-cols-2' : 'grid-cols-1'}">
          ${icons.map(i => i ? `<button aria-label="${name}"><svg class="block h-[18px] w-[18px]" viewBox="0 0 18 18">${i}</svg></button>` : '<i></i>').join('')}
        </div>
        <p class="h-[10px] bg-[#1c1c1c] text-center text-[8px] leading-[9px] whitespace-nowrap text-white">${name}</p>
      </div>`).join('');

    // Preview buttons
    const preview = [
      ['No preview', '<path d="M4 5L12 2L16 8L8 12Z" fill="#ddd" stroke="#555"/><ellipse cx="9" cy="14" rx="7" ry="4" fill="#333"/>', ''],
      ['Wireframe', '<path d="M3 9L12 2Q18 3 17 8L9 17Q2 16 3 9Z" fill="#fff" stroke="#333"/><ellipse cx="6" cy="12" rx="3" ry="5" transform="rotate(-30 6 12)" fill="none" stroke="#333"/><ellipse cx="13" cy="6" rx="3" ry="4" transform="rotate(-30 13 6)" fill="none" stroke="#333"/>', ''],
      ['Shaded', '<path d="M2 8L11 2Q18 3 18 10L10 18Q2 16 2 8Z" fill="#b81414" stroke="#500"/><ellipse cx="6" cy="12" rx="3" ry="5" transform="rotate(-30 6 12)" fill="#d83a3a"/>', 'on'],
      ['', '', ''],
      ['Selected only', '<path d="M7 5L13 2Q18 4 17 9L11 15Z" fill="#57b52c" stroke="#244"/><path d="M3 9L9 15L7 18L2 14Z" fill="#ddd" stroke="#444"/><path d="M3 4L16 17" stroke="#222" stroke-width="1.500"/>', ''],
      ['Mesh quality', '<circle cx="10" cy="10" r="8" fill="#f0922c" stroke="#333"/><path d="M10 2A8 8 0 0 1 10 18Z" fill="#eee" stroke="#333"/>', ''],
      ['', '', ''],
      ['Settings', '<path d="M10 1.500L17 5.500V14L10 18.500L3 14V5.500Z" fill="#5a9be8" stroke="#123c7c"/><path d="M9 3.500L14 6L10 11L5 9V6Z" fill="#bcdcff"/>', '']
    ];
    document.getElementById('preview-tools').innerHTML = preview.map(([n, b, on]) => n
      ? `<button aria-label="${n}" class="grid h-[21px] w-[20px] place-items-center ${on ? 'bg-[#e3eefb] outline outline-[#5a9bd8]' : ''}"><svg class="h-[18px] w-[18px]" viewBox="0 0 20 20">${b}</svg></button>`
      : '<i class="mx-[2px] h-4 w-px bg-[#c8c8c8]"></i>').join('') + '<svg class="h-[3px] w-[5px]" viewBox="0 0 5 3"><path d="M0 0H5L2.500 3Z"/></svg>';

    // Construction plane: lines run towards one vanishing point on the horizon
    let ground = '';
    for (let k = 3; k < 150; k += k > 40 ? 12 : 1) {
      const y = 130 + 1156 / k;
      ground += `<path d="M52 ${y}L440 ${y - (y - 130) * 0.034}"/>`;
    }
    for (let k = -3; k < 16; k++) {
      const x = 390 - 90 * k;
      ground += `<path stroke-opacity=".16" d="M${x} 498L${400 + (x - 400) * 0.1} 167"/>`;
    }
    document.getElementById('ground').innerHTML = ground;

    // Grips on both sides of every component
    const ports = [[559, 201], [663, 201], [569, 280], [611, 280], [672, 288], [714, 288], [664, 317], [742, 333], [884, 333], [445, 356], [479, 356], [504, 376], [468, 394], [483, 408],
      [534, 358], [534, 370], [534, 383], [534, 396], [534, 409], [534, 422], [663, 370], [663, 409], [739, 379], [739, 391], [739, 405], [739, 417], [739, 430], [896, 405], [916, 329], [932, 436], [975, 436],
      [649, 470], [684, 470], [551, 496], [583, 496], [643, 492], [688, 492], [650, 507], [682, 507], [627, 522], [699, 522], [715, 476], [715, 488], [715, 501], [715, 514], [715, 527], [715, 540], [844, 488], [844, 528], [914, 496], [914, 509], [914, 521], [955, 509]];
    document.getElementById('ports').innerHTML = ports.map(([x, y]) => `<circle cx="${x}" cy="${y}" r="3"/>`).join('');

    // Wide dark stroke with a light core gives the double line
    const list = document.getElementById('list-wires');
    const d = [...list.querySelectorAll('path')].map(p => p.getAttribute('d')).join('');
    list.innerHTML = `<path d="${d}" stroke="#4b454e" stroke-width="3"/><path d="${d}" stroke="#a9a1ae" stroke-width="1"/>`;
  </script>
</body>
</html>
